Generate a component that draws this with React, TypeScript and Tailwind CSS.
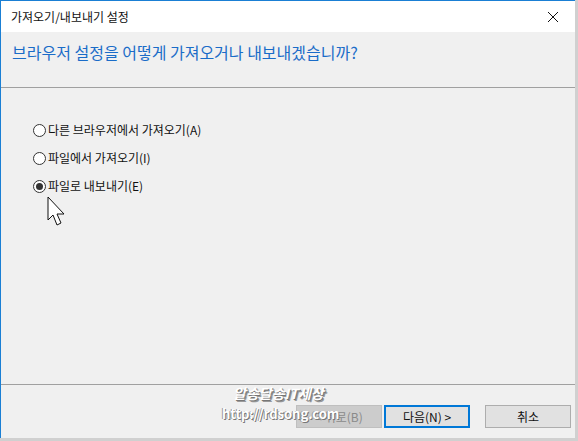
import React from "react";

const font = { fontFamily: '"Noto Sans CJK KR", "Noto Sans", sans-serif' };

const Radio = ({ label, checked }: { label: string; checked?: boolean }) => (
  <div className="flex items-center h-[28px]">
    <span className="w-[13px] h-[13px] rounded-full border border-[#333] bg-white flex items-center justify-center mr-[2px]">
      {checked && <span className="w-[7px] h-[7px] rounded-full bg-[#333]" />}
    </span>
    <span className="text-[12px] text-[#111] leading-none">{label}</span>
  </div>
);

export default function App() {
  return (
    <div className="w-[578px] h-[441px] bg-[#d0d0d0] overflow-hidden" style={font}>
      <div className="w-[575px] h-[438px] border-l border-t border-[#1a7fd4] bg-[#f0f0f0] flex flex-col relative">
        <div className="h-[31px] bg-white flex items-center justify-between pl-[10px] pr-[16px]">
          <span className="text-[12px] text-[#111]">가져오기/내보내기 설정</span>
          <svg width="12" height="12" viewBox="0 0 12 12">
            <path d="M1 1 L11 11 M11 1 L1 11" stroke="#111" strokeWidth="1" />
          </svg>
        </div>
        <div className="h-[56px] pl-[11px] pt-[8px] border-b border-[#a0a0a0]">
          <span className="text-[16px] text-[#1a6cc8]">브라우저 설정을 어떻게 가져오거나 내보내겠습니까?</span>
        </div>
        <div className="flex-1 pl-[32px] pt-[28px] flex flex-col border-b border-[#a0a0a0]">
          <Radio label="다른 브라우저에서 가져오기(A)" />
          <Radio label="파일에서 가져오기(I)" />
          <Radio label="파일로 내보내기(E)" checked />
        </div>
        <div className="h-[53px] flex items-start justify-end pt-[20px] pr-[4px] gap-[2px]">
          <button className="w-[86px] h-[23px] bg-[#cccccc] border border-[#bfbfbf] text-[12px] text-[#8a8a8a]">&lt; 뒤로(B)</button>
          <button className="w-[86px] h-[23px] bg-[#e1e1e1] border-2 border-[#0078d7] text-[12px] text-[#111]">다음(N) &gt;</button>
          <button className="w-[86px] h-[23px] ml-[13px] bg-[#e1e1e1] border border-[#adadad] text-[12px] text-[#111]">취소</button>
        </div>

        <div className="absolute left-[232px] top-[382px] text-[14px] font-bold italic text-white" style={{ textShadow: "1px 1px 0 #777, 2px 2px 0 #999" }}>
          알송달송IT세상
        </div>
        <div className="absolute left-[221px] top-[403px] text-[13px] font-bold text-white" style={{ textShadow: "1px 1px 0 #777, -1px 0 0 #999" }}>
          http://rdsong.com
        </div>

        <svg className="absolute left-[46px] top-[195px]" width="20" height="32" viewBox="0 0 20 32">
          <path d="M1 1 L1 24 L6 19 L10 29 L14 27 L10 18 L17 18 Z" fill="white" stroke="#111" strokeWidth="1" strokeLinejoin="miter" />
        </svg>
      </div>
    </div>
  );
}
